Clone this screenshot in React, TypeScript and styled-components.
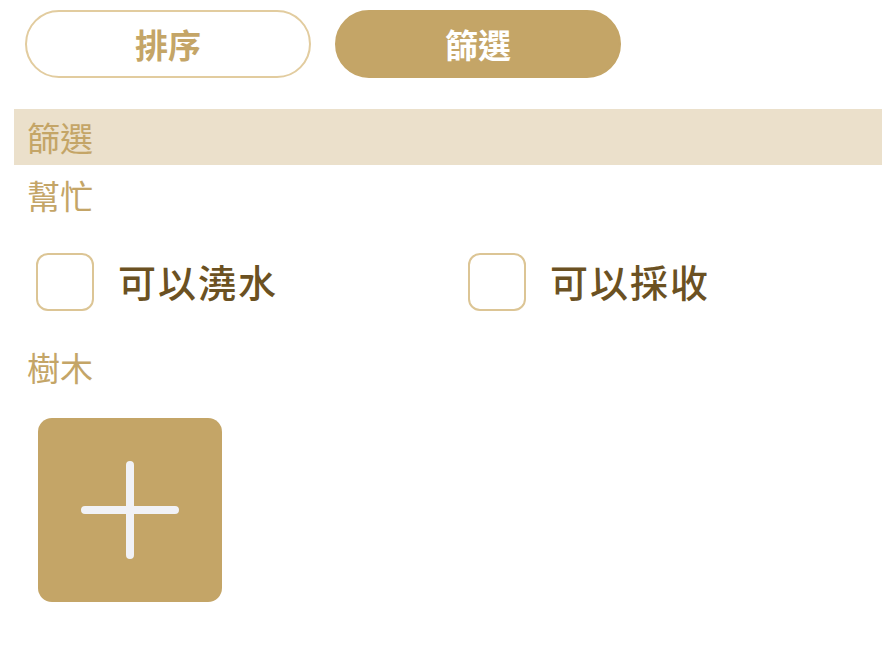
import React, { useState } from 'react'
import styled, { createGlobalStyle } from 'styled-components'

const GlobalStyle = createGlobalStyle`
  body {
    margin: 0;
    background: #fff;
    font-family: "Noto Sans CJK TC", "Noto Sans", sans-serif;
  }
`

const GOLD = '#c4a567'

const App = () => {
  const [tab, setTab] = useState<'sort' | 'filter'>('filter')
  const [checks, setChecks] = useState({ water: false, harvest: false })

  return (
    <>
      <GlobalStyle />
      <S.Page>
        <S.Tabs>
          <S.TabBtn active={tab === 'sort'} onClick={() => setTab('sort')}>排序</S.TabBtn>
          <S.TabBtn active={tab === 'filter'} onClick={() => setTab('filter')}>篩選</S.TabBtn>
        </S.Tabs>
        <S.Header>篩選</S.Header>
        <S.Body>
          <S.Label>幫忙</S.Label>
          <S.CheckRow>
            <S.CheckItem onClick={() => setChecks({ ...checks, water: !checks.water })}>
              <S.Box checked={checks.water} />
              <S.CheckText>可以澆水</S.CheckText>
            </S.CheckItem>
            <S.CheckItem onClick={() => setChecks({ ...checks, harvest: !checks.harvest })}>
              <S.Box checked={checks.harvest} />
              <S.CheckText>可以採收</S.CheckText>
            </S.CheckItem>
          </S.CheckRow>
          <S.Label>樹木</S.Label>
          <S.AddTile>
            <svg width="100" height="100" viewBox="0 0 100 100">
              <path d="M50 5 V95 M5 50 H95" stroke="#f1f2f6" strokeWidth="8" strokeLinecap="round" />
            </svg>
          </S.AddTile>
        </S.Body>
      </S.Page>
    </>
  )
}

const S = {
  Page: styled.div`
    width: 882px;
    padding-top: 10px;
    padding-left: 14px;
    box-sizing: border-box;
  `,
  Tabs: styled.div`
    display: flex;
    gap: 24px;
    margin-left: 11px;
  `,
  TabBtn: styled.button<{ active: boolean }>`
    width: 286px;
    height: 68px;
    border-radius: 34px;
    border: 2px solid ${({ active }) => (active ? GOLD : '#e2cc9f')};
    background: ${({ active }) => (active ? GOLD : '#fff')};
    color: ${({ active }) => (active ? '#fff' : GOLD)};
    font-family: "Noto Sans CJK TC", sans-serif;
    font-size: 33px;
    font-weight: 700;
    padding: 0;
    cursor: pointer;
  `,
  Header: styled.div`
    margin-top: 31px;
    height: 56px;
    background: #ebe0cb;
    color: ${GOLD};
    font-size: 33px;
    line-height: 56px;
    padding-left: 13px;
  `,
  Body: styled.div`
    padding-left: 13px;
  `,
  Label: styled.div`
    color: ${GOLD};
    font-size: 33px;
    line-height: 44px;
    margin-top: 8px;
  `,
  CheckRow: styled.div`
    display: flex;
    margin: 36px 0 34px 9px;
  `,
  CheckItem: styled.div`
    flex: 0 0 432px;
    display: flex;
    align-items: center;
    gap: 24px;
    cursor: pointer;
  `,
  Box: styled.div<{ checked: boolean }>`
    width: 54px;
    height: 54px;
    border: 2px solid #dcc595;
    border-radius: 12px;
    background: ${({ checked }) => (checked ? GOLD : '#fff')};
  `,
  CheckText: styled.span`
    color: #6b5122;
    font-size: 38px;
    font-weight: 500;
    letter-spacing: 2px;
    margin-top: -4px;
  `,
  AddTile: styled.div`
    width: 184px;
    height: 184px;
    margin: 29px 0 0 11px;
    border-radius: 14px;
    background: ${GOLD};
    display: flex;
    align-items: center;
    justify-content: center;
  `,
}

export default App
